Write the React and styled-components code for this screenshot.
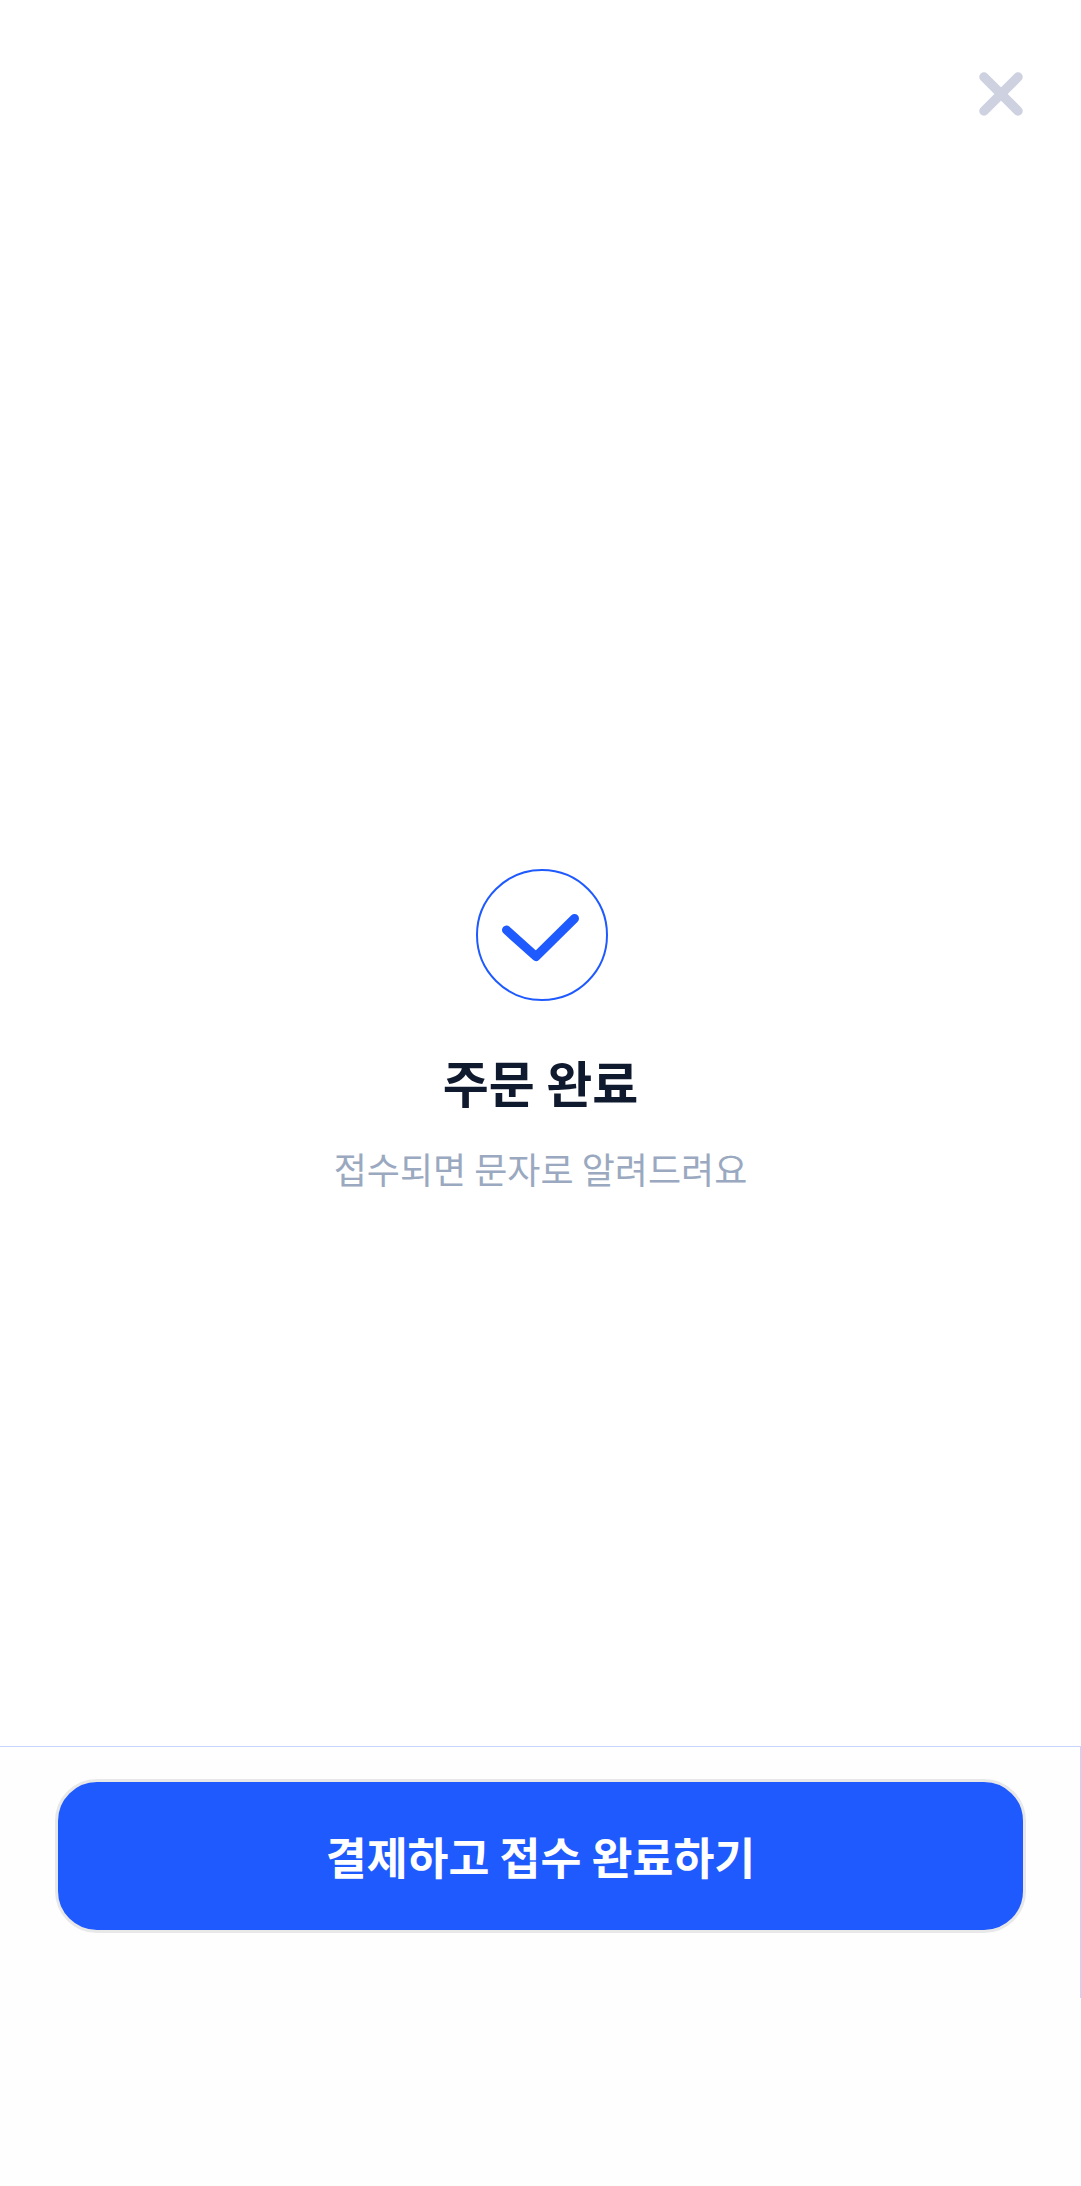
import React from "react";
import styled, { createGlobalStyle } from "styled-components";

const Global = createGlobalStyle`
  html, body { margin: 0; padding: 0; background: #ffffff; }
  * { box-sizing: border-box; }
`;

const Page = styled.div`
  width: 1081px;
  height: 2186px;
  display: flex;
  flex-direction: column;
  font-family: "Noto Sans CJK KR", "Noto Sans", sans-serif;
  background: #ffffff;
`;

const Header = styled.header`
  height: 869px;
  display: flex;
  justify-content: flex-end;
  align-items: flex-start;
  padding: 70px 56px 0 0;
`;

const CloseButton = styled.button`
  width: 48px;
  height: 48px;
  padding: 0;
  border: 0;
  background: none;
  display: block;
`;

const Main = styled.main`
  height: 877px;
  display: flex;
  flex-direction: column;
  align-items: center;
`;

const CheckBadge = styled.svg`
  display: block;
  width: 132px;
  height: 132px;
  margin-left: 2px;
`;

const Title = styled.h1`
  margin: 47px 0 0;
  font-size: 50px;
  line-height: 66px;
  font-weight: 700;
  color: #101a2e;
  text-align: center;
`;

const Subtitle = styled.p`
  margin: 29px 0 0;
  font-size: 36px;
  line-height: 50px;
  font-weight: 400;
  color: #9aa9c0;
  text-align: center;
`;

const Footer = styled.footer`
  flex: 1;
  background: #fefefe;
`;

const ActionBar = styled.div`
  height: 252px;
  padding: 32px 54px 0 55px;
  border-top: 1px solid #c6d5ff;
  border-right: 1px solid #c6d5ff;
`;

const PrimaryButton = styled.button`
  width: 100%;
  height: 154px;
  border: 3px solid #e8e8e8;
  border-radius: 42px;
  background: #1f5afe;
  color: #ffffff;
  font-family: inherit;
  font-size: 44.500px;
  font-weight: 700;
  line-height: 1;
`;

export default function App() {
  return (
    <Page>
      <Global />
      <Header>
        <CloseButton aria-label="닫기">
          <svg width="48" height="48" viewBox="0 0 48 48" fill="none">
            <path d="M7 7 L41 41 M41 7 L7 41" stroke="#cdd1e0" strokeWidth="9.500" strokeLinecap="round" />
          </svg>
        </CloseButton>
      </Header>
      <Main>
        <CheckBadge viewBox="0 0 132 132" fill="none">
          <circle cx="66" cy="66" r="65" stroke="#1f5afe" strokeWidth="2" />
          <path d="M30.500 61 L60 87.500 L98.500 49.500" stroke="#1f5afe" strokeWidth="9" strokeLinecap="round" strokeLinejoin="round" />
        </CheckBadge>
        <Title>주문 완료</Title>
        <Subtitle>접수되면 문자로 알려드려요</Subtitle>
      </Main>
      <Footer>
        <ActionBar>
          <PrimaryButton>결제하고 접수 완료하기</PrimaryButton>
        </ActionBar>
      </Footer>
    </Page>
  );
}
